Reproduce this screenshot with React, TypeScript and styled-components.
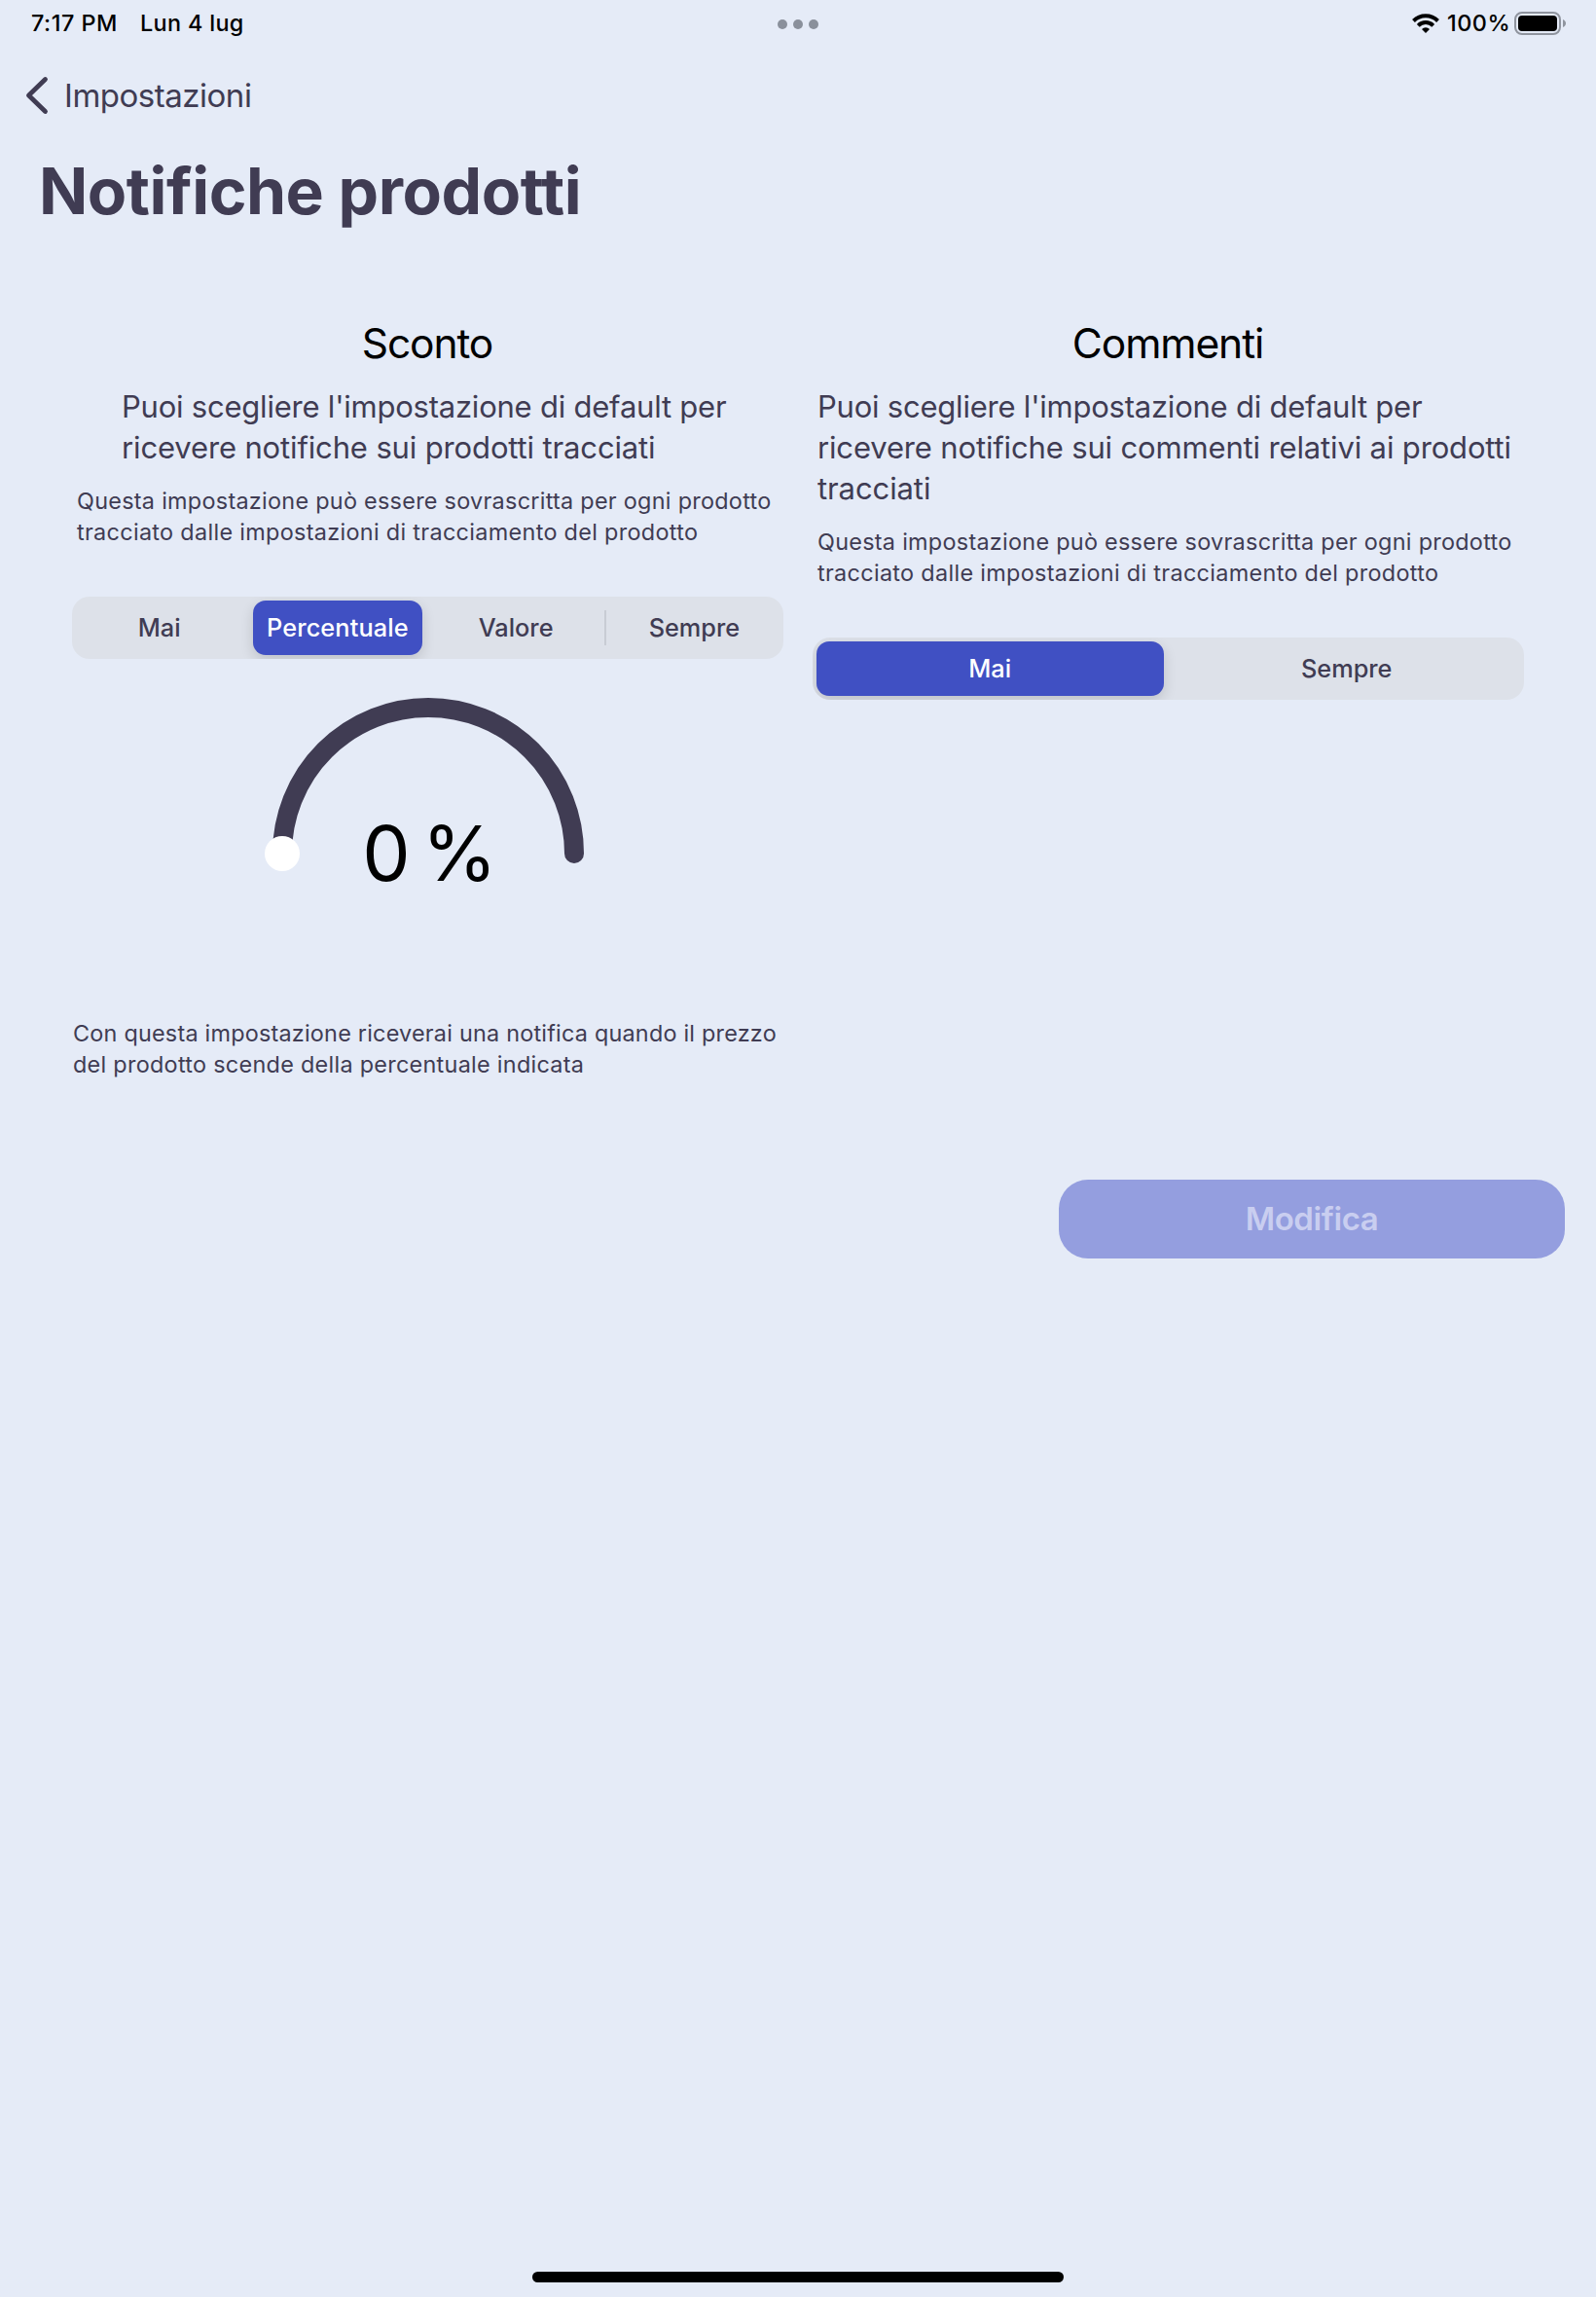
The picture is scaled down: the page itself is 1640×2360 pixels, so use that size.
import React from "react";
import styled, { createGlobalStyle } from "styled-components";

const ink = "#403c53";

const GlobalStyle = createGlobalStyle`
  html, body { margin: 0; padding: 0; background: #e5ebf7; }
  *, *::before, *::after { box-sizing: border-box; }
  button { font: inherit; border: 0; padding: 0; background: none; }
  h1, h2, p { margin: 0; font-weight: 400; }
`;

const Screen = styled.div`
  display: flex;
  flex-direction: column;
  width: 1640px;
  height: 2360px;
  background: #e5ebf7;
  color: ${ink};
  font-family: Inter, "Liberation Sans", sans-serif;
  white-space: nowrap;
`;

const StatusBar = styled.header`
  display: grid;
  grid-template-columns: 1fr auto 1fr;
  align-items: center;
  height: 48px;
  padding: 0 30px;
  color: #000;
  font-size: 23.4px;
  font-weight: 500;
  line-height: 32px;
`;

const StatusGroup = styled.div<{ $end?: boolean }>`
  display: flex;
  align-items: center;
  justify-content: ${(p) => (p.$end ? "flex-end" : "flex-start")};
  padding-left: ${(p) => (p.$end ? 0 : 2)}px;
`;

const StatusText = styled.span<{ $width: number; $spacing: number; $gap?: number }>`
  width: ${(p) => p.$width}px;
  margin-left: ${(p) => p.$gap ?? 0}px;
  letter-spacing: ${(p) => p.$spacing}px;
`;

const Dots = styled.div`
  display: flex;
  gap: 6px;
  padding-top: 2px;
`;

const Dot = styled.i`
  width: 10px;
  height: 10px;
  border-radius: 50%;
  background: #8a909b;
`;

const BackButton = styled.button`
  display: flex;
  align-items: center;
  gap: 15px;
  height: 100px;
  padding-left: 26px;
  color: ${ink};
  font-size: 33px;
  letter-spacing: -0.48px;
`;

const Title = styled.h1`
  padding-left: 40px;
  font-size: 66px;
  font-weight: 700;
  line-height: 96px;
  letter-spacing: -0.48px;
`;

const Columns = styled.main`
  display: grid;
  grid-template-columns: 731px 731px;
  column-gap: 30px;
  padding: 83px 0 0 74px;
`;

const Column = styled.section`
  display: flex;
  flex-direction: column;
`;

const Heading = styled.h2`
  padding-right: 1px;
  color: #000;
  text-align: center;
  font-size: 42.5px;
  line-height: 52px;
  letter-spacing: -1.1px;
`;

const Lead = styled.p<{ $indent: number }>`
  margin-top: 18px;
  padding-left: ${(p) => p.$indent}px;
  font-size: 31px;
  line-height: 42px;
`;

const Note = styled.p<{ $indent: number }>`
  margin-top: 18px;
  padding-left: ${(p) => p.$indent}px;
  font-size: 23.4px;
  line-height: 32px;
`;

const Line = styled.span<{ $spacing: number }>`
  display: block;
  letter-spacing: ${(p) => p.$spacing}px;
`;

const Segments = styled.div<{ $shift: number }>`
  display: flex;
  align-items: center;
  height: 64px;
  margin-top: 50px;
  padding: 4px ${(p) => 4 + p.$shift}px 4px ${(p) => 4 - p.$shift}px;
  border-radius: 18px;
  background: #dde1e9;
  overflow: hidden;
`;

const Segment = styled.button<{ $selected?: boolean }>`
  flex: 1 1 0;
  height: 56px;
  border-radius: 13px;
  background: ${(p) => (p.$selected ? "#4050c3" : "transparent")};
  box-shadow: ${(p) => (p.$selected ? "0 5px 14px rgba(0, 0, 0, 0.14)" : "none")};
  color: ${(p) => (p.$selected ? "#fff" : ink)};
  font-size: 25.3px;
  font-weight: 500;
  line-height: 56px;
  letter-spacing: ${(p) => (p.$selected ? 0.12 : 0)}px;
`;

const Divider = styled.i<{ $visible?: boolean }>`
  width: 2px;
  height: 36px;
  margin: 0 4px;
  background: ${(p) => (p.$visible ? "#c8ccd4" : "transparent")};
`;

const Gauge = styled.div`
  display: grid;
  justify-items: center;
  height: 351px;
`;

const GaugeArc = styled.svg`
  grid-area: 1 / 1;
  width: 340px;
  height: 240px;
`;

const GaugeValue = styled.output`
  grid-area: 1 / 1;
  padding: 150px 0 0 4px;
  color: #000;
  font-size: 78.4px;
  line-height: 100px;
  word-spacing: -10px;
`;

const Actions = styled.div`
  display: flex;
  justify-content: flex-end;
  padding: 102px 32px 0 0;
`;

const SubmitButton = styled.button`
  width: 520px;
  height: 81px;
  padding-bottom: 2px;
  border-radius: 30px;
  background: #949edf;
  color: #c9cef0;
  font-size: 33px;
  font-weight: 600;
  letter-spacing: -0.4px;
`;

const HomeIndicator = styled.div`
  width: 546px;
  height: 11px;
  margin: auto auto 15px;
  border-radius: 6px;
  background: #000;
`;

const WifiIcon = () => (
  <svg width="28" height="20" viewBox="0 0 28 20" fill="none" stroke="#000" strokeWidth="4">
    <path d="M1.500 7.500a17.700 17.700 0 0 1 25 0" />
    <path d="M6.300 12.300a10.900 10.900 0 0 1 15.400 0" />
    <path d="M14 20l-4-4.100a5.700 5.700 0 0 1 8 0z" fill="#000" stroke="none" />
  </svg>
);

const BatteryIcon = () => (
  <svg width="54" height="24" viewBox="0 0 54 24">
    <rect x="1" y="1" width="46" height="22" rx="7" fill="none" stroke="#8f949e" strokeWidth="2" />
    <rect x="4" y="4" width="40" height="16" rx="4" fill="#000" />
    <path d="M50 8c4 1.400 4 6.600 0 8z" fill="#8f949e" />
  </svg>
);

const ChevronIcon = () => (
  <svg width="25" height="40" viewBox="0 0 25 40" fill="none" stroke={ink} strokeWidth="4.8" strokeLinecap="round" strokeLinejoin="round">
    <path d="M20.500 3.500L3.500 20l17 16.500" />
  </svg>
);

type SegmentedProps = { options: string[]; value: string };

const Segmented = ({ options, value }: SegmentedProps) => {
  const current = options.indexOf(value);
  return (
    <Segments $shift={current > 0 ? 1 : 0}>
      {options.map((label, i) => (
        <React.Fragment key={label}>
          {i > 0 && <Divider $visible={i !== current && i - 1 !== current} />}
          <Segment $selected={i === current}>{label}</Segment>
        </React.Fragment>
      ))}
    </Segments>
  );
};

const OverrideNote = () => (
  <Note $indent={5}>
    <Line $spacing={0.28}>Questa impostazione può essere sovrascritta per ogni prodotto</Line>
    <Line $spacing={0.32}>tracciato dalle impostazioni di tracciamento del prodotto</Line>
  </Note>
);

export default function App() {
  return (
    <>
      <GlobalStyle />
      <Screen>
        <StatusBar>
          <StatusGroup>
            <StatusText $width={112} $spacing={0.5}>7:17 PM</StatusText>
            <StatusText $width={115} $spacing={0.33}>Lun 4 lug</StatusText>
          </StatusGroup>
          <Dots>
            <Dot />
            <Dot />
            <Dot />
          </Dots>
          <StatusGroup $end>
            <WifiIcon />
            <StatusText $width={69} $spacing={0.5} $gap={8}>100%</StatusText>
            <BatteryIcon />
          </StatusGroup>
        </StatusBar>
        <BackButton>
          <ChevronIcon />
          Impostazioni
        </BackButton>
        <Title>Notifiche prodotti</Title>
        <Columns>
          <Column>
            <Heading>Sconto</Heading>
            <Lead $indent={51}>
              <Line $spacing={-0.22}>Puoi scegliere l'impostazione di default per</Line>
              <Line $spacing={-0.14}>ricevere notifiche sui prodotti tracciati</Line>
            </Lead>
            <OverrideNote />
            <Segmented options={["Mai", "Percentuale", "Valore", "Sempre"]} value="Percentuale" />
            <Gauge>
              <GaugeArc viewBox="0 0 340 240">
                <path d="M20 200a150 150 0 0 1 300 0" fill="none" stroke={ink} strokeWidth="20" strokeLinecap="round" />
                <circle cx="20" cy="200" r="18" fill="#fff" />
              </GaugeArc>
              <GaugeValue>0 %</GaugeValue>
            </Gauge>
            <Note $indent={1}>
              <Line $spacing={0.22}>Con questa impostazione riceverai una notifica quando il prezzo</Line>
              <Line $spacing={0.29}>del prodotto scende della percentuale indicata</Line>
            </Note>
          </Column>
          <Column>
            <Heading>Commenti</Heading>
            <Lead $indent={5}>
              <Line $spacing={-0.22}>Puoi scegliere l'impostazione di default per</Line>
              <Line $spacing={-0.15}>ricevere notifiche sui commenti relativi ai prodotti</Line>
              <Line $spacing={-0.1}>tracciati</Line>
            </Lead>
            <OverrideNote />
            <Segmented options={["Mai", "Sempre"]} value="Mai" />
          </Column>
        </Columns>
        <Actions>
          <SubmitButton>Modifica</SubmitButton>
        </Actions>
        <HomeIndicator />
      </Screen>
    </>
  );
}
